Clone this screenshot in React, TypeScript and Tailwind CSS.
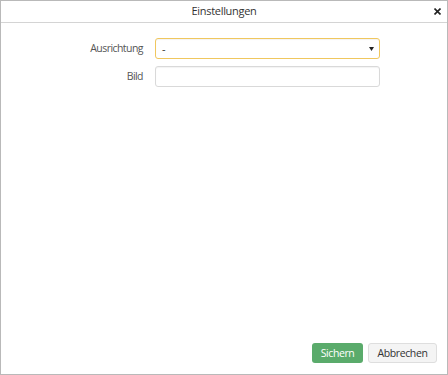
import React from 'react'

export default function App() {
  return (
    <div className="w-[448px] h-[375px] bg-white border border-[#b9b9b9] flex flex-col font-['Open_Sans',sans-serif] text-[#333]">
      {/* Title bar */}
      <div className="relative h-[22px] shrink-0 border-b border-[#d4d4d4] flex items-center justify-center">
        <span className="text-[11px] tracking-[-0.3px] text-[#333]">Einstellungen</span>
        <button className="absolute right-[3px] top-[3px] w-[14px] h-[14px] flex items-center justify-center text-[#222]">
          <svg width="7" height="7" viewBox="0 0 7 7">
            <path d="M0.5 0.5L6.5 6.5M6.5 0.5L0.5 6.5" stroke="currentColor" strokeWidth="1.6" />
          </svg>
        </button>
      </div>

      {/* Form */}
      <div className="flex-1 pt-[15px] flex flex-col gap-[7px]">
        <div className="flex items-center">
          <label className="w-[154px] text-right pr-[12px] text-[10.5px] tracking-[-0.55px] text-[#555]">
            Ausrichtung
          </label>
          <div className="w-[225px] h-[21px] rounded-[3px] border border-[#f0c75e] bg-white flex items-center justify-between pl-[6px] pr-[5px] shadow-[inset_0_1px_1px_rgba(0,0,0,0.05)]">
            <span className="text-[11px] text-[#333] leading-none">-</span>
            <svg width="5" height="4" viewBox="0 0 5 4">
              <path d="M0 0H5L2.5 4Z" fill="#222" />
            </svg>
          </div>
        </div>
        <div className="flex items-center">
          <label className="w-[154px] text-right pr-[12px] text-[10.5px] tracking-[-0.55px] text-[#555]">
            Bild
          </label>
          <div className="w-[225px] h-[21px] rounded-[3px] border border-[#d9d9d9] bg-white shadow-[inset_0_1px_1px_rgba(0,0,0,0.05)]" />
        </div>
      </div>

      {/* Footer */}
      <div className="flex justify-end gap-[5px] pr-[10px] pb-[11px]">
        <button className="w-[51px] h-[20px] rounded-[3px] bg-[#5aab6b] text-white text-[10.5px] tracking-[-0.4px] leading-none">
          Sichern
        </button>
        <button className="w-[69px] h-[20px] rounded-[3px] bg-[#f4f4f4] border border-[#dedede] text-[#333] text-[10.5px] tracking-[-0.4px] leading-none">
          Abbrechen
        </button>
      </div>
    </div>
  )
}
